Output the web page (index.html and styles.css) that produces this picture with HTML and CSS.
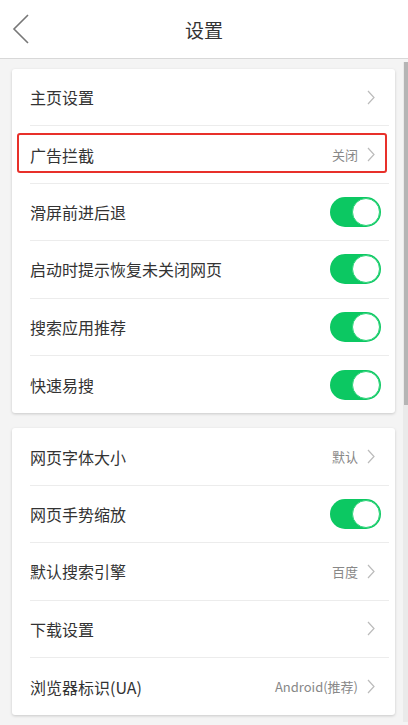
FILE: index.html
```html
<!DOCTYPE html>
<html lang="zh-CN">
<head>
  <meta charset="UTF-8">
  <title>设置</title>
  <link rel="stylesheet" href="styles.css">
</head>
<body>
  <div class="header">
    <svg class="back" width="18" height="30" viewBox="0 0 18 30"><polyline points="16,1 2,15 16,29" fill="none" stroke="#777" stroke-width="1.6"/></svg>
    <div class="title">设置</div>
  </div>
  <div class="main">
    <div class="content">
      <div class="card">
        <div class="row"><span class="label">主页设置</span><span class="right"><svg class="arrow" width="8" height="15" viewBox="0 0 8 15"><polyline points="1,1 7,7.5 1,14" fill="none" stroke="#bbb" stroke-width="1.2"/></svg></span></div>
        <div class="row highlight"><span class="label">广告拦截</span><span class="right"><span class="value">关闭</span><svg class="arrow" width="8" height="15" viewBox="0 0 8 15"><polyline points="1,1 7,7.5 1,14" fill="none" stroke="#bbb" stroke-width="1.2"/></svg></span></div>
        <div class="row"><span class="label">滑屏前进后退</span><span class="switch"></span></div>
        <div class="row"><span class="label">启动时提示恢复未关闭网页</span><span class="switch"></span></div>
        <div class="row"><span class="label">搜索应用推荐</span><span class="switch"></span></div>
        <div class="row"><span class="label">快速易搜</span><span class="switch"></span></div>
      </div>
      <div class="card">
        <div class="row"><span class="label">网页字体大小</span><span class="right"><span class="value">默认</span><svg class="arrow" width="8" height="15" viewBox="0 0 8 15"><polyline points="1,1 7,7.5 1,14" fill="none" stroke="#bbb" stroke-width="1.2"/></svg></span></div>
        <div class="row"><span class="label">网页手势缩放</span><span class="switch"></span></div>
        <div class="row"><span class="label">默认搜索引擎</span><span class="right"><span class="value">百度</span><svg class="arrow" width="8" height="15" viewBox="0 0 8 15"><polyline points="1,1 7,7.5 1,14" fill="none" stroke="#bbb" stroke-width="1.2"/></svg></span></div>
        <div class="row"><span class="label">下载设置</span><span class="right"><svg class="arrow" width="8" height="15" viewBox="0 0 8 15"><polyline points="1,1 7,7.5 1,14" fill="none" stroke="#bbb" stroke-width="1.2"/></svg></span></div>
        <div class="row"><span class="label">浏览器标识(UA)</span><span class="right"><span class="value">Android(推荐)</span><svg class="arrow" width="8" height="15" viewBox="0 0 8 15"><polyline points="1,1 7,7.5 1,14" fill="none" stroke="#bbb" stroke-width="1.2"/></svg></span></div>
      </div>
    </div>
    <div class="scrollbar"><div class="thumb"></div></div>
  </div>
</body>
</html>
```

FILE: styles.css
```css
body { margin: 0; background: #f4f4f4; font-family: "Noto Sans CJK SC", "Noto Sans", sans-serif; color: #333; overflow: hidden; }
.header { height: 58px; background: #fff; border-bottom: 1px solid #d8d8d8; display: flex; align-items: center; justify-content: center; position: relative; }
.back { position: absolute; left: 12px; top: 14px; }
.title { font-size: 19px; color: #333; }
.main { display: flex; }
.content { flex: 1; padding: 10px 8px 0 12px; }
.scrollbar { width: 5px; background: #eaeaea; margin-top: 3px; height: 660px; }
.thumb { height: 343px; background: #b5b5b5; margin-left: 1px; }
.card { background: #fff; border-radius: 3px; box-shadow: 0 1px 3px rgba(0,0,0,0.18); margin-bottom: 15px; padding: 0 6px 0 18px; }
.row { height: 56.4px; display: flex; align-items: center; justify-content: space-between; border-bottom: 1px solid #ececec; position: relative; }
.row:last-child { border-bottom: none; height: 57.4px; }
.label { font-size: 16px; }
.right { display: flex; align-items: center; padding-right: 14px; }
.value { font-size: 13px; color: #888; margin-right: 9px; }
.arrow { display: block; }
.highlight::before { content: ""; position: absolute; left: -13px; right: 2px; top: 7px; bottom: 10px; border: 2px solid #e8302a; border-radius: 3px; }
.switch { width: 51px; height: 30px; background: #0cc862; border-radius: 15px; position: relative; margin-right: 8px; }
.switch::after { content: ""; position: absolute; right: 1px; top: 1px; width: 26px; height: 26px; border-radius: 50%; background: #fff; border: 1px solid #2fd47a; }
```
